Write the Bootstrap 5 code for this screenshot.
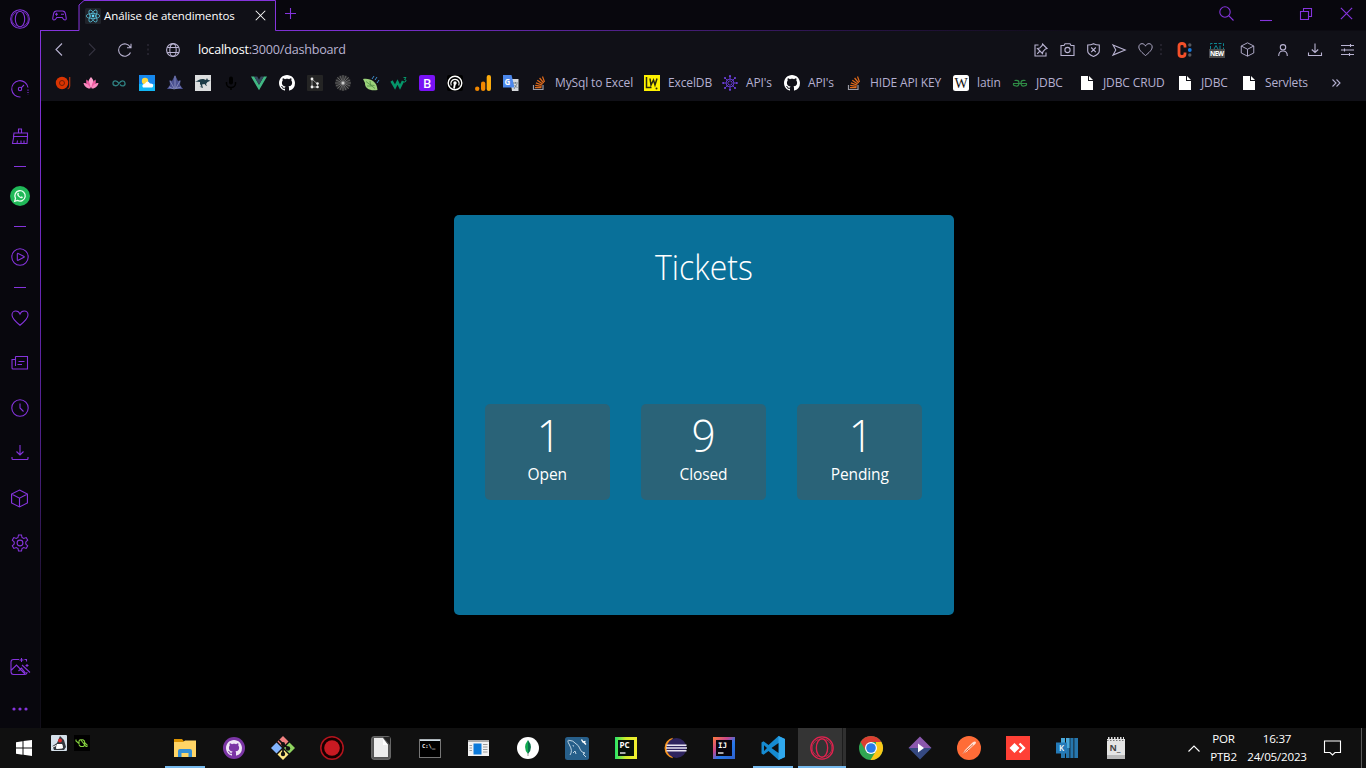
<!DOCTYPE html>
<html lang="pt-BR">
<head>
<meta charset="utf-8">
<meta name="viewport" content="width=device-width, initial-scale=1">
<title>Análise de atendimentos</title>
<link rel="stylesheet" href="https://cdn.jsdelivr.net/npm/bootstrap@5.3.0/dist/css/bootstrap.min.css">
<script src="https://cdn.jsdelivr.net/npm/bootstrap@5.3.0/dist/js/bootstrap.bundle.min.js"></script>
<style>
:root{--gx:#8534dc;--ink:#b9b3d2}
body{font-family:"Open Sans","Noto Sans",sans-serif;background:#000;width:1366px;height:768px;overflow:hidden;font-size:12px;line-height:16px}
svg{display:block;flex:none;overflow:visible}
.ln{fill:none;stroke:currentColor;stroke-width:1.1}
.nowrap{white-space:nowrap}
.upper{height:728px}
/* side rail */
.rail{width:41px;background:linear-gradient(#8534dc,#6a28b8 35%,#4a2080 62%,#110e19 85%) 40px 30px/1px 698px no-repeat,#08070d;color:var(--gx)}
.rail>div{width:39px;height:30px;display:flex;align-items:center;justify-content:center;flex:none}
.rail .top-logo{height:38px;width:40px}
.rail .far{margin-top:36px}
.rail .mid{margin-top:15px}
.rail .mid.first{margin-top:17px}
.rail .d31{height:31px}
.rail .wa{width:40px}
.rail .end{margin-top:94px;width:40px}
.rail .dots{margin-top:12px;width:40px}
.rail i{width:12px;height:1px;background:currentColor;margin-left:1px}
/* tab strip */
.strip{height:31px;background:linear-gradient(90deg,#8534dc,#7a2fce 25%,#2a144a 60%,#0c0b12 80%) 0 30px/100% 1px no-repeat,#08070d;color:var(--gx)}
.strip .pad-icon{width:38px;padding-right:2px}
.tab-on{width:197px;height:31px;position:relative;color:#fff;padding:0 10px 0 6px}
.tab-on .outline{position:absolute;left:0;top:0}
.tab-on>*:not(.outline){position:relative}
.tab-title{font-size:11.5px;width:133px;margin-left:3px;letter-spacing:-.08px}
.winbtn{width:40px}
/* address bar */
.address{height:37px;background:#101017;color:var(--ink);padding-left:1px}
.b33{width:33px}.b26{width:26px}.b13{width:13px}.b6{width:6px}.b32{width:32.6px}
.url{font-size:12.6px;letter-spacing:-.22px;padding-left:7px}
.sep{color:#34323f}
.right-end{margin-right:2px}
/* bookmarks */
.marks{height:33px;background:#101017;color:#b4afd0;gap:12px;padding:0 0 3px 14px;font-size:12px;letter-spacing:-.13px}
.marks .named{gap:8px}
.w77{width:77px}.w42{width:42px}.w26{width:26px}.w71{width:71px}.w23{width:23px}.w31{width:31px}.w62{width:62px}.w28{width:28px}.w55{width:55px}
/* dashboard */
.panel{width:500px;height:400px;background:#097099;border-radius:5px;color:#fff;padding-top:25px}
.panel h1{font-size:35.5px;line-height:52px;font-weight:300;margin:0 0 112px;transform:scaleX(.9)}
.tile{width:125px;height:96px;border-radius:5px;background:#2a6378;padding-top:3px}
.tile b{font-size:45px;line-height:56px;font-weight:300;display:block;transform:scaleX(.94)}
.tile .one{padding-left:3px}
.tile span{font-size:15.5px;line-height:22px;display:block;letter-spacing:-.1px}
/* taskbar */
.tasks{height:40px;background:#101010;color:#fff}
.tasks .start{width:48px}
.tasks .quick{width:112px}
.tasks .app{width:49px;height:40px}
.tasks .app.run{background:linear-gradient(#76b9ed,#76b9ed) 5px 38px/40px 2px no-repeat}
.tasks .app.cur{width:48px;margin-left:1px;color:#e3224f;background:linear-gradient(#76b9ed,#76b9ed) 0 38px/100% 2px no-repeat,linear-gradient(90deg,#343434 44px,#1c1c1c 44px,#1c1c1c 45px,#303030 45px)}
.small-app{width:23px;height:30px;padding-right:2px}
.clock{font-size:11.6px;line-height:18px;letter-spacing:-.2px;text-align:center}
.clock.lang{width:47px}
.clock.time{width:60px}
.bell{margin:0 20px 0 17px}
.peek{width:1px;height:40px;background:#5a5a5a;margin-right:4px}
</style>
</head>
<body class="d-flex flex-column">
<!-- shared symbols -->
<svg width="0" height="0" class="position-absolute">
<symbol id="gh" viewBox="0 0 16 16"><path fill="currentColor" d="M8 0C3.58 0 0 3.58 0 8c0 3.54 2.29 6.53 5.47 7.59.4.07.55-.17.55-.38 0-.19-.01-.82-.01-1.49-2.01.37-2.53-.49-2.69-.94-.09-.23-.48-.94-.82-1.13-.28-.15-.68-.52-.01-.53.63-.01 1.08.58 1.23.82.72 1.21 1.87.87 2.33.66.07-.52.28-.87.51-1.07-1.78-.2-3.64-.89-3.64-3.95 0-.87.31-1.59.82-2.15-.08-.2-.36-1.02.08-2.12 0 0 .67-.21 2.2.82.64-.18 1.32-.27 2-.27s1.36.09 2 .27c1.53-1.04 2.2-.82 2.2-.82.44 1.1.16 1.92.08 2.12.51.56.82 1.27.82 2.15 0 3.07-1.87 3.75-3.65 3.95.29.25.54.73.54 1.48 0 1.07-.01 1.93-.01 2.2 0 .21.15.46.55.38A8.01 8.01 0 0 0 16 8c0-4.42-3.58-8-8-8z"/></symbol>
<symbol id="so" viewBox="0 0 16 16"><path d="M2.500 10v4.500h9.500V10" fill="none" stroke="#9b9ba5" stroke-width="1.200"/><path d="M4 12.600h6.500M4.200 10.400l6.400.9M4.900 7.900l6.100 2.100M6.300 5.200l5.400 3.800M8.600 3l4.100 5M11.500 1.500l2 5.500" stroke="#e06a1b" stroke-width="1.200"/></symbol>
<symbol id="doc" viewBox="0 0 16 16"><path fill="#fff" d="M2 1h7v5h5v9H2zM10 1l4 4h-4z"/></symbol>
<symbol id="cube" viewBox="0 0 18 18"><path class="ln" d="M9 1l7.500 3.800v8.400L9 17l-7.500-3.800V4.800zM1.500 4.800L9 8.700l7.500-3.900M9 8.700V17"/></symbol>
<symbol id="heart" viewBox="0 0 18 18"><path class="ln" d="M9 16.200C5 13 1 9.500 1 6 1 3.500 2.800 2 4.800 2 6.800 2 8.300 3.200 9 5c.7-1.800 2.200-3 4.200-3S17 3.500 17 6c0 3.500-4 7-8 10.200z"/></symbol>
<symbol id="down" viewBox="0 0 18 18"><path class="ln" d="M9 1v10M5.500 7.500L9 11l3.500-3.500M1 13v1.500q0 1 1 1h14q1 0 1-1V13"/></symbol>
<symbol id="opera" viewBox="0 0 20 20"><g class="ln"><circle cx="10" cy="10" r="9.300"/><ellipse cx="10" cy="10" rx="4.700" ry="7.700"/><path d="M7 2.800C0 6 0 14 7 17.200M13 2.800c7 3.200 7 11.200 0 14.400" stroke-width=".7"/></g></symbol>
<symbol id="x" viewBox="0 0 12 12"><path class="ln" d="M.8.8l10.400 10.400M11.200.8L.8 11.200"/></symbol>
</svg>

<div class="upper d-flex">
  <nav class="rail d-flex flex-column">
    <div class="top-logo"><svg width="20" height="20"><use href="#opera"/></svg></div>
    <div class="far"><svg width="18" height="18" viewBox="0 0 18 18"><g class="ln"><path d="M9.500 17A8.200 8.200 0 1 1 17 7.500"/><circle cx="9" cy="9" r="1.700"/><path d="M10.200 7.800L13 5"/><path d="M17 9.500v5" stroke-dasharray="1.200 1.200"/></g></svg></div>
    <div class="mid first"><svg width="18" height="18" viewBox="0 0 18 18"><path class="ln" d="M7.500 6V2h3v4M3 6h13.500v3.500H2.500zM2.800 9.500L1.500 16.500h14.500l.5-7M6 16.500l.5-3M10 16.500v-3M13 16.500v-3"/></svg></div>
    <div><i></i></div>
    <div class="wa"><svg width="20" height="20" viewBox="0 0 20 20"><circle cx="10" cy="10" r="10" fill="#20b858"/><path d="M4.700 15.300l.8-2.900a5.200 5.200 0 1 1 2 2z" fill="none" stroke="#eafff0" stroke-width="1.300"/><path d="M7.500 7.200c.8-.9 1.200-.2 1.500.8l-.5.8c.5 1 1.300 1.700 2.300 2.200l.8-.7c1.500.6 1.700.9.800 1.700-1 .9-2.600 0-3.800-1.200S6.700 8 7.500 7.200z" fill="#eafff0"/></svg></div>
    <div class="d31"><i></i></div>
    <div><svg width="18" height="18" viewBox="0 0 18 18"><g class="ln"><circle cx="9" cy="9" r="8.200"/><path d="M6.300 6q0-.9.900-.6l5.800 3q.7.400 0 .9l-5.800 3q-.9.400-.9-.6z"/></g></svg></div>
    <div class="d31"><i></i></div>
    <div><svg width="18" height="18"><use href="#heart"/></svg></div>
    <div class="mid"><svg width="18" height="18" viewBox="0 0 18 18"><path class="ln" d="M4.500 2.500h12v12.500H2q-1 0-1-1V5.500h3.500M4.500 2.500v9.500M7.500 7.500h6M6.500 10.500h4.500"/></svg></div>
    <div class="mid"><svg width="18" height="18" viewBox="0 0 18 18"><g class="ln"><circle cx="9" cy="9" r="8.200"/><path d="M9 4.500V9l3.500 3.500"/></g></svg></div>
    <div class="mid"><svg width="18" height="18"><use href="#down"/></svg></div>
    <div class="mid"><svg width="19" height="19"><use href="#cube"/></svg></div>
    <div class="mid"><svg width="18" height="18" viewBox="0 0 18 18"><g class="ln"><circle cx="9" cy="9" r="2.900"/><path d="M7.500 1h3l.5 2.500 1.700 1 2.500-.9 1.500 2.600-1.900 1.700v2.200l1.900 1.700-1.500 2.600-2.500-.9-1.700 1-.5 2.500h-3L7 14.500l-1.700-1-2.500.9-1.500-2.600 1.900-1.700V7.900L1.300 6.200l1.500-2.600 2.500.9 1.700-1z"/></g></svg></div>
    <div class="end"><svg width="20" height="18" viewBox="0 0 20 18"><path class="ln" d="M9 1.500H3.500Q1 1.500 1 4v9.500Q1 16.500 3.500 16.500h11q2.500 0 2.500-2.500M1.500 12l5-5 8.500 9M8.500 13l3-3 4 5M12 7l8 7.500M11.500 0v4M9.500 2h4M14.500 1.500h2v2M17 6v3M15.500 7.500h3"/></svg></div>
    <div class="dots"><svg width="16" height="4" viewBox="0 0 16 4" fill="currentColor"><circle cx="2" cy="2" r="1.600"/><circle cx="8" cy="2" r="1.600"/><circle cx="14" cy="2" r="1.600"/></svg></div>
  </nav>

  <div class="flex-grow-1 d-flex flex-column">
    <header class="strip d-flex align-items-center">
      <div class="pad-icon d-flex justify-content-center"><svg width="15" height="11" viewBox="0 0 15 11"><path class="ln" d="M4.500 1h6q2.500 0 3 3l.7 4q.2 2-1.200 2T10.200 7.500H4.800Q3.400 10 2 10T.8 8l.7-4q.5-3 3-3zM9 4.200h3M4.500 2.800v3M3 4.300h3"/></svg></div>
      <div class="tab-on d-flex align-items-center">
        <svg class="outline" width="197" height="31" viewBox="0 0 197 31"><path d="M0 31V5L5 .5h191.500V31z" fill="#101017"/><path d="M0 30.500V5L5 .5h191.500V30.500" fill="none" stroke="#8534dc"/></svg>
        <svg width="16" height="16" viewBox="0 0 16 16"><rect width="16" height="16" rx="1.500" fill="#20232a"/><g fill="none" stroke="#55b9d2" stroke-width=".8"><ellipse cx="8" cy="8" rx="6.800" ry="2.600"/><ellipse cx="8" cy="8" rx="6.800" ry="2.600" transform="rotate(60 8 8)"/><ellipse cx="8" cy="8" rx="6.800" ry="2.600" transform="rotate(120 8 8)"/></g><circle cx="8" cy="8" r="1.400" fill="#61dafb"/></svg>
        <span class="tab-title nowrap">Análise de atendimentos</span>
        <svg class="ms-auto" width="11" height="11"><use href="#x"/></svg>
      </div>
      <svg class="ms-2 mb-1" width="13" height="13" viewBox="0 0 13 13"><path class="ln" d="M6.500 1v11M1 6.500h11"/></svg>
      <div class="winbtn ms-auto mb-1 d-flex justify-content-center"><svg width="15" height="15" viewBox="0 0 15 15"><circle class="ln" cx="6" cy="6" r="5.200"/><path class="ln" d="M9.700 9.700l4.800 4.800"/></svg></div>
      <div class="winbtn d-flex justify-content-center"><svg width="12" height="12" viewBox="0 0 12 12"><path class="ln" d="M0 10.500h12"/></svg></div>
      <div class="winbtn mb-1 d-flex justify-content-center"><svg width="12" height="12" viewBox="0 0 12 12"><path class="ln" d="M.5 3.500h8v8h-8zM3.500 3.500v-3h8v8h-3"/></svg></div>
      <div class="winbtn mb-1 d-flex justify-content-center"><svg width="13" height="13"><use href="#x"/></svg></div>
    </header>

    <div class="address d-flex align-items-center">
      <div class="b33 d-flex justify-content-center"><svg width="8" height="13" viewBox="0 0 8 13"><path class="ln" d="M7 .5l-6 6 6 6"/></svg></div>
      <div class="b33 d-flex justify-content-center sep"><svg width="8" height="13" viewBox="0 0 8 13"><path class="ln" d="M1 .5l6 6-6 6"/></svg></div>
      <div class="b33 d-flex justify-content-center"><svg width="14" height="14" viewBox="0 0 14 14"><path class="ln" d="M12.500 9.500A6.200 6.200 0 1 1 12.300 4.200M13 .8v4H9"/></svg></div>
      <div class="b13 d-flex justify-content-center sep"><svg width="2" height="11" viewBox="0 0 2 11" fill="#24222d"><path d="M0 0h2v2H0zM0 4.500h2v2H0zM0 9h2v2H0z"/></svg></div>
      <div class="b33 ps-1 d-flex justify-content-center"><svg width="14" height="14" viewBox="0 0 14 14"><g class="ln"><circle cx="7" cy="7" r="6.400"/><ellipse cx="7" cy="7" rx="3.200" ry="6.400"/><path d="M1.300 4.500h11.400M1.300 9.500h11.400"/></g></svg></div>
      <div class="url nowrap ms-1"><span class="text-white">localhost</span>:3000/dashboard</div>
      <div class="b26 ms-auto d-flex justify-content-center"><svg width="14" height="14" viewBox="0 0 14 14"><path class="ln" d="M4.500 2H1v11h11V9.500M8.500 1l4.500 4.500-1.500.4L9 8.500l-.5 2.200L3.500 5.500l2.200-.4L8.200 2.500zM6 8L3.200 10.800"/></svg></div>
      <div class="b26 d-flex justify-content-center"><svg width="15" height="13" viewBox="0 0 15 13"><path class="ln" d="M1 2.500h3L5 .7h5l1 1.800h3v10H1z"/><circle class="ln" cx="7.500" cy="7" r="2.600"/></svg></div>
      <div class="b26 d-flex justify-content-center"><svg width="13" height="14" viewBox="0 0 13 14"><path class="ln" d="M6.500.7Q9 2 12.300 2v6q0 3-5.800 5.500Q.7 11 .7 8V2Q4 2 6.500.7zM4.200 4.500l4.600 4.600M8.800 4.500L4.200 9.100"/></svg></div>
      <div class="b26 d-flex justify-content-center"><svg width="14" height="12" viewBox="0 0 14 12"><path class="ln" d="M1 .9L13.200 6 1 11.100 3.800 6z"/></svg></div>
      <div class="b26 d-flex justify-content-center"><svg width="15" height="15"><use href="#heart"/></svg></div>
      <div class="b6 d-flex justify-content-center sep"><svg width="2" height="11" viewBox="0 0 2 11" fill="#24222d"><path d="M0 0h2v2H0zM0 4.500h2v2H0zM0 9h2v2H0z"/></svg></div>
      <div class="b32 ms-1 d-flex justify-content-center"><svg width="15" height="16" viewBox="0 0 15 16"><path d="M8 5.500V4Q8 1.500 5 1.500T2 4v8q0 2.500 3 2.500T8 12v-1.500" fill="none" stroke="#f4502a" stroke-width="2.800"/><circle cx="12.800" cy="3" r="1.700" fill="#56585e"/><circle cx="12.800" cy="8" r="1.900" fill="#1479e0"/><circle cx="12.800" cy="13" r="1.700" fill="#56585e"/></svg></div>
      <div class="b32 d-flex justify-content-center"><svg width="16" height="16" viewBox="0 0 16 16"><path d="M1.500 7V1.500h13V7" fill="none" stroke="#0d8792" stroke-dasharray="3 1.500"/><path d="M5 7l2-3.500L9 7M11 3.500V7" fill="none" stroke="#0d8792"/><rect y="7" width="16" height="9" fill="#4a4a4a"/><text x="8" y="14" font-size="6.500" font-weight="700" text-anchor="middle" fill="#fff" textLength="14">NEW</text></svg></div>
      <div class="b32 d-flex justify-content-center"><svg class="me-1" width="15" height="15"><use href="#cube"/></svg></div>
      <div class="b32 d-flex justify-content-center"><svg width="10" height="12" viewBox="0 0 10 12"><circle class="ln" cx="5" cy="3.300" r="2.700"/><path class="ln" d="M.7 12Q.7 7 5 7t4.300 5"/></svg></div>
      <div class="b32 d-flex justify-content-center"><svg width="14" height="14" viewBox="0 0 14 14"><path class="ln" d="M7 .5v9M3.800 6.500L7 9.500l3.200-3M.5 9.500v3h13v-3"/></svg></div>
      <div class="b32 right-end d-flex justify-content-center"><svg width="13" height="12" viewBox="0 0 13 12"><path class="ln" d="M0 1.500h13M0 6h13M0 10.500h13M9.500 0v3M3.500 4.500v3M8.500 9v3"/></svg></div>
    </div>

    <div class="marks d-flex align-items-center nowrap">
      <svg width="16" height="16" viewBox="0 0 16 16"><circle cx="7" cy="8" r="6.200" fill="#d93402"/><circle cx="7" cy="8" r="2.500" fill="none" stroke="#701d05"/><path d="M14.700 2v9q0 2-2 3" fill="none" stroke="#a93210" stroke-width="1.200"/></svg>
      <svg width="16" height="16" viewBox="0 0 16 16"><path d="M8 13C4 9 5 5 8 2c3 3 4 7 0 11z" fill="#ffa0ce"/><path d="M7.500 13C4 12 2.500 8 3.500 4.500 6 6 7.500 9 7.500 13zM8.500 13c3.500-1 5-5 4-8.500C10 6 8.500 9 8.500 13z" fill="#ef5ba1"/><path d="M7.500 13.500C4 14 1 11 .5 8c3 0 6 2 7 5.500zM8.500 13.500c3.500.5 6.500-2.500 7-5.500-3 0-6 2-7 5.500z" fill="#f989bf"/></svg>
      <svg width="16" height="16" viewBox="0 0 16 16"><path d="M8 8.500C6 5 2.300 5 2 8s4 4 6 .5 5.500-3.500 6-.5-3 4-5 1.500" fill="none" stroke="#2f8081" stroke-width="1.300"/></svg>
      <svg width="16" height="16" viewBox="0 0 16 16"><rect width="16" height="16" fill="#1688ee"/><rect y="9" width="16" height="7" fill="#12b7f5"/><circle cx="6" cy="6" r="3.200" fill="#ffd83d"/><path d="M4 12.500q-2-3 2-4 2.500-4 5 0 4-.2 3 3-.3 1-1.300 1z" fill="#fff"/></svg>
      <svg width="16" height="16" viewBox="0 0 16 16"><path d="M8 0l3 6 2.500-1-.5 5 3 4H0l3-4-.5-5L5 6z" fill="#4a5090"/><path d="M8 1v12M3 6l4 7M13 6l-4 7M2 12l5 2 7-2" stroke="#9ba0cc" stroke-width=".7" fill="none"/></svg>
      <svg width="16" height="16" viewBox="0 0 16 16"><rect width="16" height="16" fill="#dcdedf"/><path d="M0 6.500C3 6 5 3.500 8.500 4l2.500 1 1-2 .8 1.800 2.700 1-3 1.200-1.500 2 1 2-1.200-.5-1.300-1.500-2.500.5 1 3.500-3.500-1.200 2-.3-1.500-2.500L5 7z" fill="#1c3b47"/></svg>
      <svg width="16" height="16" viewBox="0 0 16 16"><rect x="6" y="1.500" width="4" height="8" rx="2" fill="#000"/><path d="M3.500 7v1.500a4.500 4 0 0 0 9 0V7M8 12v3" fill="none" stroke="#000" stroke-width="1.500"/></svg>
      <svg width="16" height="16" viewBox="0 0 16 16"><path d="M0 1.500h3.200L8 9.800l4.800-8.300H16L8 15.300z" fill="#41b883"/><path d="M3.200 1.500h3L8 4.700l1.800-3.200h3L8 9.800z" fill="#35495e"/></svg>
      <svg class="text-white" width="16" height="16"><use href="#gh"/></svg>
      <svg width="16" height="16" viewBox="0 0 16 16"><rect width="16" height="16" rx="1" fill="#242424"/><path d="M5 4.500v7M5 12h5.500V9L6 5" stroke="#aaa" stroke-width=".8" fill="none"/><g fill="#eee"><circle cx="5" cy="4" r="1.400"/><circle cx="5" cy="12" r="1.400"/><circle cx="10.500" cy="8.500" r="1.300"/><circle cx="10.500" cy="12" r="1.300"/></g></svg>
      <svg width="16" height="16" viewBox="0 0 16 16"><circle cx="8" cy="8" r="7.800" fill="#2c2c2e"/><path d="M8 0v16M0 8h16M2.300 2.300l11.400 11.400M13.700 2.300L2.300 13.700M5 .8l6 14.400M11 .8L5 15.200M.8 5l14.400 6M.8 11l14.400-6" stroke="#999" stroke-width=".5"/><circle cx="8" cy="8" r="1.500" fill="#ccc"/></svg>
      <svg width="16" height="16" viewBox="0 0 16 16"><path d="M0 4c7-1 14 2 14.500 11C7 16.500 1.500 13 2 8z" fill="#9bd27a"/><path d="M3 6.500l9 7M7 6l.5 4 4 .5M4 11l4.500 0" stroke="#4e8c42" fill="none" stroke-width=".8"/><path d="M9 4l2-3M12 5l2-3M14 8l2-3" stroke="#3f8dca"/></svg>
      <svg width="16" height="16" viewBox="0 0 16 16"><path d="M.5 6l3.500 6 2.500-5 2.500 5 3-6" fill="none" stroke="#059669" stroke-width="2.500"/><path d="M12.500 2.500h2.500l-1.500 2q2 0 1.500 1.500t-2.500 1" fill="none" stroke="#059669"/></svg>
      <svg width="16" height="16" viewBox="0 0 16 16"><rect width="16" height="16" rx="2" fill="#7912f5"/><text x="8" y="12.500" font-size="12.500" font-weight="600" text-anchor="middle" fill="#fff">B</text></svg>
      <svg width="16" height="16" viewBox="0 0 16 16"><rect width="16" height="16" rx="2" fill="#000"/><g fill="none" stroke="#fff"><circle cx="8" cy="8" r="6.800" stroke-width="1.400"/><path d="M4.300 10.500a4.200 4.200 0 1 1 7.400 0" stroke-width="1.200"/><path d="M7 13.500l1-5.500" stroke-width="1.800"/></g><circle cx="8" cy="8" r="1.700" fill="#fff"/></svg>
      <svg width="16" height="16" viewBox="0 0 16 16"><circle cx="2.200" cy="13.800" r="2.200" fill="#f08700"/><rect x="6" y="6.500" width="4.300" height="9.500" rx="2.100" fill="#f08700"/><rect x="11.700" width="4.300" height="16" rx="2.100" fill="#fbab0d"/></svg>
      <svg width="16" height="16" viewBox="0 0 16 16"><path d="M7 4h8.500v12H9z" fill="#d5d7dc"/><path d="M0 0h8.500l3 12.500H0z" fill="#4b87ec"/><path d="M10 8h5M12.500 7v1.500M11 14l3-5M11.500 10l3 3" stroke="#63727a" stroke-width=".8"/><text x="1.500" y="9.500" font-size="8" font-weight="700" fill="#fff">G</text></svg>
      <div class="named d-flex align-items-center"><svg width="16" height="16"><use href="#so"/></svg><span class="w77">MySql to Excel</span></div>
      <div class="named d-flex align-items-center"><svg width="16" height="16" viewBox="0 0 16 16"><rect width="16" height="16" fill="#fff200"/><path d="M2.500 2v10.500h5M6 3.500l1 6.500 2.500-5 1.500 5 2-6.500" fill="none" stroke="#28270f" stroke-width="1.500"/><circle cx="12.500" cy="13.500" r="1" fill="#28270f"/></svg><span class="w42">ExcelDB</span></div>
      <div class="named d-flex align-items-center"><svg width="16" height="16" viewBox="0 0 16 16"><g stroke="#6038c4" fill="none"><circle cx="8" cy="8" r="4"/><path d="M8 1v14M1 8h14M3 3l10 10M13 3L3 13"/></g><g fill="#6e40dc"><circle cx="8" cy="1.200" r="1.100"/><circle cx="8" cy="14.800" r="1.100"/><circle cx="1.200" cy="8" r="1.100"/><circle cx="14.800" cy="8" r="1.100"/><circle cx="3" cy="3" r="1.100"/><circle cx="13" cy="3" r="1.100"/><circle cx="3" cy="13" r="1.100"/><circle cx="13" cy="13" r="1.100"/></g><circle cx="8" cy="8" r="1.300" fill="#101017"/></svg><span class="w26">API's</span></div>
      <div class="named d-flex align-items-center"><svg class="text-white" width="16" height="16"><use href="#gh"/></svg><span class="w26">API's</span></div>
      <div class="named d-flex align-items-center"><svg width="16" height="16"><use href="#so"/></svg><span class="w71">HIDE API KEY</span></div>
      <div class="named d-flex align-items-center"><svg width="16" height="16" viewBox="0 0 16 16"><rect width="16" height="16" rx="2.500" fill="#fff"/><text x="8" y="12.500" font-family="Liberation Serif,serif" font-size="14" text-anchor="middle" fill="#111">W</text></svg><span class="w23">latin</span></div>
      <div class="named d-flex align-items-center"><svg width="16" height="16" viewBox="0 0 16 16"><path d="M1 8.500h14M2.500 5.500q4.500-1 4.500 2.500t-3 3-2.500-2M13.500 5.500q-4.500-1-4.500 2.500t3 3 2.500-2" fill="none" stroke="#2f8d46" stroke-width="1.200"/></svg><span class="w31">JDBC</span></div>
      <div class="named d-flex align-items-center"><svg width="16" height="16"><use href="#doc"/></svg><span class="w62">JDBC CRUD</span></div>
      <div class="named d-flex align-items-center"><svg width="16" height="16"><use href="#doc"/></svg><span class="w28">JDBC</span></div>
      <div class="named d-flex align-items-center"><svg width="16" height="16"><use href="#doc"/></svg><span class="w55">Servlets</span></div>
      <svg width="8" height="8" viewBox="0 0 8 8"><path class="ln" d="M.5.5L4 4 .5 7.500M4.500.5L8 4 4.500 7.500"/></svg>
    </div>

    <main class="flex-grow-1 d-flex align-items-center justify-content-center">
      <section class="panel text-center">
        <h1>Tickets</h1>
        <div class="d-flex justify-content-evenly">
          <div class="tile"><b class="one">1</b><span>Open</span></div>
          <div class="tile"><b>9</b><span>Closed</span></div>
          <div class="tile"><b class="one">1</b><span>Pending</span></div>
        </div>
      </section>
    </main>
  </div>
</div>

<footer class="tasks d-flex align-items-center">
  <div class="start d-flex justify-content-center"><svg width="16" height="16" viewBox="0 0 16 16"><path d="M0 2.300L6.500 1.300V7.500H0zM7.500 1.100L16 0v7.500H7.500zM0 8.500h6.500v6.200L0 13.700zM7.500 8.500H16V16l-8.500-1.200z" fill="#fff"/></svg></div>
  <div class="quick d-flex align-self-start">
    <div class="small-app d-flex align-items-center justify-content-center"><svg width="16" height="16" viewBox="0 0 16 16"><rect width="16" height="16" rx="1" fill="#d5e0ea"/><path d="M9 1l4 4 2 7-2 3H3l-1.500-4L6 8z" fill="#34383e"/><path d="M6 9.500h5l.5 3.500-6 .5zM1 12.500l4-2" fill="#fff" stroke="#fff"/><circle cx="9" cy="5.500" r="1.900" fill="#d92a2a"/></svg></div>
    <div class="small-app d-flex align-items-center justify-content-center"><svg width="16" height="16" viewBox="0 0 16 16"><rect width="16" height="16" fill="#000"/><path d="M2 4.500v1.500l3 2.500M5 9.500V6l1-1.200h3L10.500 6v4.500l-1 1h-3L5 10M6.500 4.500l5.500 7h1.500M10.500 7.500l3 3" fill="none" stroke="#83ce3d" stroke-width="1.100"/></svg></div>
  </div>
  <div class="app run d-flex align-items-center justify-content-center"><svg width="22" height="18" viewBox="0 0 22 18"><path d="M0 0h8l2 2.500V9H0z" fill="#dc9300"/><path d="M0 3h9l2-1.500h11V18H0z" fill="#ffd566"/><path d="M4 18v-6q0-2 2-2h10q2 0 2 2v6h-3.500v-4h-7v4z" fill="#3590d5"/></svg></div>
  <div class="app d-flex align-items-center justify-content-center"><svg width="22" height="22" viewBox="0 0 22 22"><circle cx="11" cy="11" r="11" fill="#7b35a5"/><svg x="3" y="3" width="16" height="16" color="#f0e7f6"><use href="#gh"/></svg></svg></div>
  <div class="app d-flex align-items-center justify-content-center"><svg width="24" height="24" viewBox="0 0 24 24"><path d="M12 0l5.500 5.500L12 11 6.500 5.500z" fill="#f08080"/><path d="M5.500 6.500L11 12l-5.500 5.500L0 12z" fill="#82b4ff"/><path d="M18.500 6.500L24 12l-5.500 5.500L13 12z" fill="#8fd45f"/><path d="M12 13l5.500 5.500L12 24l-5.500-5.500z" fill="#ffe783"/><path d="M8 4l4 4v11M12 8l5 4" stroke="#111" stroke-width="1.700" fill="none"/><g fill="#111"><circle cx="12" cy="8" r="2"/><circle cx="12" cy="18" r="2.200"/><circle cx="17" cy="12.500" r="2.200"/></g></svg></div>
  <div class="app d-flex align-items-center justify-content-center"><svg width="24" height="24" viewBox="0 0 24 24"><circle cx="12" cy="12" r="11.200" fill="#150000" stroke="#b3141d" stroke-width="1.500"/><circle cx="12" cy="12" r="7.800" fill="#c81a22"/></svg></div>
  <div class="app d-flex align-items-center justify-content-center"><svg width="20" height="24" viewBox="0 0 20 24"><rect x=".7" y=".7" width="18.600" height="22.600" rx="2" fill="#555" stroke="#777"/><path d="M3 2h9l5 7v12H3z" fill="#ededed"/><path d="M12 1h7v8z" fill="#222"/><path d="M12 3l5 6h-5z" fill="#fff"/></svg></div>
  <div class="app d-flex align-items-center justify-content-center"><svg width="22" height="19" viewBox="0 0 22 19"><rect x=".5" y=".5" width="21" height="18" fill="#000" stroke="#777"/><path d="M1 1.200h20" stroke="#cfdde5" stroke-width="1.600"/><text x="3" y="9" font-family="DejaVu Sans Mono,monospace" font-size="5.500" font-weight="700" fill="#eee">C:\_</text></svg></div>
  <div class="app d-flex align-items-center justify-content-center"><svg width="21" height="16" viewBox="0 0 21 16"><rect width="21" height="16" fill="#f2f2f2"/><path d="M0 0h21v2H0z" fill="#aaa"/><rect x="5.500" y="3.500" width="8" height="11" fill="#0b79d9"/><path d="M1.500 5.500H4M1.500 8H4M1.500 10.500H4M15 4.500h4.500M15 7h4.500M15 9.500h4.500M15 12h4.500" stroke="#9a9a9a"/></svg></div>
  <div class="app d-flex align-items-center justify-content-center"><svg width="22" height="22" viewBox="0 0 22 22"><circle cx="11" cy="11" r="11" fill="#fff"/><path d="M11 3q-6 7.500 0 14z" fill="#10aa50"/><path d="M11 3q6 7.500 0 14z" fill="#08704a"/><path d="M11 16v3" stroke="#999"/></svg></div>
  <div class="app d-flex align-items-center justify-content-center"><svg width="24" height="23" viewBox="0 0 24 23"><rect width="24" height="23" rx="2.500" fill="#275f8a"/><path d="M5 18Q8 14 4.500 8T5 3.500q3 0 5 2.500 4 2 5.500 7 1 2.500 4.500 3l-2 1 3 3M8 8l.5 1.500M8 16l2-2 1 3" fill="none" stroke="#c0d5e4"/><path d="M16.500 2.500l1.500 2.500 2.500-.5M18.500 5l2.500 2.500" stroke="#fff" stroke-width="1.400" fill="none"/></svg></div>
  <div class="app d-flex align-items-center justify-content-center"><svg width="22" height="22" viewBox="0 0 22 22"><defs><linearGradient id="pc"><stop stop-color="#25e56a"/><stop offset=".5" stop-color="#d4ed28"/><stop offset="1" stop-color="#f3ef30"/></linearGradient></defs><rect width="22" height="22" fill="url(#pc)"/><rect x="3" y="3" width="16" height="16" fill="#071109"/><text x="4.500" y="11" font-size="8" font-weight="700" fill="#fff">PC</text><path d="M5 16h5.500" stroke="#fff" stroke-width="1.300"/></svg></div>
  <div class="app d-flex align-items-center justify-content-center"><svg width="24" height="22" viewBox="0 0 24 22"><path d="M10 .7a10.500 10.500 0 0 0 0 20.600q-6-10 0-20.600z" fill="#f7941e"/><circle cx="13.500" cy="11" r="10" fill="#2e245e"/><path d="M3.500 8.300h20M3 11h21M3.500 13.700h20" stroke="#e9e5f3" stroke-width="1.600"/></svg></div>
  <div class="app d-flex align-items-center justify-content-center"><svg width="22" height="22" viewBox="0 0 22 22"><defs><linearGradient id="ij" x2="1" y2="1"><stop stop-color="#ff7a3a"/><stop offset=".35" stop-color="#c8468c"/><stop offset=".6" stop-color="#2479ed"/><stop offset="1" stop-color="#315fc9"/></linearGradient></defs><rect width="22" height="22" fill="url(#ij)"/><rect x="3" y="3" width="16" height="16" fill="#08040c"/><text x="5" y="11" font-family="DejaVu Sans Mono,monospace" font-size="7.500" font-weight="700" fill="#fff">IJ</text><path d="M5 16h5.500" stroke="#fff" stroke-width="1.300"/></svg></div>
  <div class="app run d-flex align-items-center justify-content-center"><svg width="24" height="24" viewBox="0 0 24 24"><path d="M17.500 0L24 3v18l-6.500 3L7.500 15 2.500 18.800.5 17.500V6.500l2-1.300 5 3.800z" fill="#168bd1"/><path d="M17.500 0L24 3v18l-6.500 3z" fill="#30a8ed"/><path d="M17.500 7v10L10.500 12zM3 9.200V15l3-3z" fill="#101010"/></svg></div>
  <div class="app cur d-flex align-items-center justify-content-center"><svg width="24" height="24"><use href="#opera"/></svg></div>
  <div class="app d-flex align-items-center justify-content-center"><svg width="24" height="24" viewBox="0 0 24 24"><circle cx="12" cy="12" r="12" fill="#30a652"/><path d="M1.600 6A12 12 0 0 1 22.400 6H12L7 15z" fill="#dc3e31"/><path d="M22.400 6A12 12 0 0 1 11.500 24L17 15 17 6z" fill="#fbc718"/><circle cx="12" cy="12" r="6" fill="#fff"/><circle cx="12" cy="12" r="4.800" fill="#2b7be9"/></svg></div>
  <div class="app d-flex align-items-center justify-content-center"><svg width="24" height="24" viewBox="0 0 24 24"><path d="M12 .5L23.500 12H.5z" fill="#8b58ad"/><path d="M.5 12h23L12 23.500z" fill="#354981"/><path d="M10 7.500l6 4.500-6 4.500z" fill="#fff"/></svg></div>
  <div class="app d-flex align-items-center justify-content-center"><svg width="24" height="24" viewBox="0 0 24 24"><circle cx="12" cy="12" r="12" fill="#ff6c37"/><path d="M5.500 18L8 14l7.500-7.500q3-2 3.500 0 0 1.500-2.500 3L10 15.500z" fill="#ffe2d5"/><path d="M6 17.500l10-9M10 13l2 2" stroke="#df5a2c" stroke-width=".9"/></svg></div>
  <div class="app d-flex align-items-center justify-content-center"><svg width="24" height="24" viewBox="0 0 24 24"><rect width="24" height="24" fill="#ff4035"/><path d="M8.500 7l5 5-5 5-5-5z" fill="#fff"/><path d="M13.500 7.500L18 12l-4.500 4.500" stroke="#fff" stroke-width="2.300" fill="none"/></svg></div>
  <div class="app d-flex align-items-center justify-content-center"><svg width="22" height="20" viewBox="0 0 22 20"><path d="M5 0h4v20H5zM10 0h3.500v20H10zM14.300 0h3.200v20h-3.200zM18.300 0H22v20h-3.700z" fill="#2676ad"/><path d="M5 0h4v5H5zM10 0h3.500v10H10z" fill="#49a8da"/><rect y="4.500" width="11" height="11" fill="#247ab8"/><text x="5.500" y="13" font-size="8" font-weight="600" text-anchor="middle" fill="#fff">K</text></svg></div>
  <div class="app d-flex align-items-center justify-content-center"><svg width="18" height="22" viewBox="0 0 18 22"><path d="M0 2h18v20H0z" fill="#e4e4e4"/><path d="M0 18h18v4H0z" fill="#b9b9b9"/><path d="M1 1h16" stroke="#ddd" stroke-width="2" stroke-dasharray="1.500 1.500"/><path d="M0 3.500h18" stroke="#777" stroke-dasharray="1.500 1.500"/><text x="2.500" y="14" font-size="9" font-weight="700" fill="#444">N_</text></svg></div>

  <svg class="ms-auto" width="12" height="7" viewBox="0 0 12 7"><path class="ln" d="M.5 6.500L6 1l5.500 5.500"/></svg>
  <div class="clock lang">POR<br>PTB2</div>
  <div class="clock time">16:37<br>24/05/2023</div>
  <svg class="bell" width="17" height="16" viewBox="0 0 17 16"><path class="ln" d="M.5 1h16v11.500H11L8.500 15 6 12.500H.5z"/></svg>
  <div class="peek"></div>
</footer>
</body>
</html>
